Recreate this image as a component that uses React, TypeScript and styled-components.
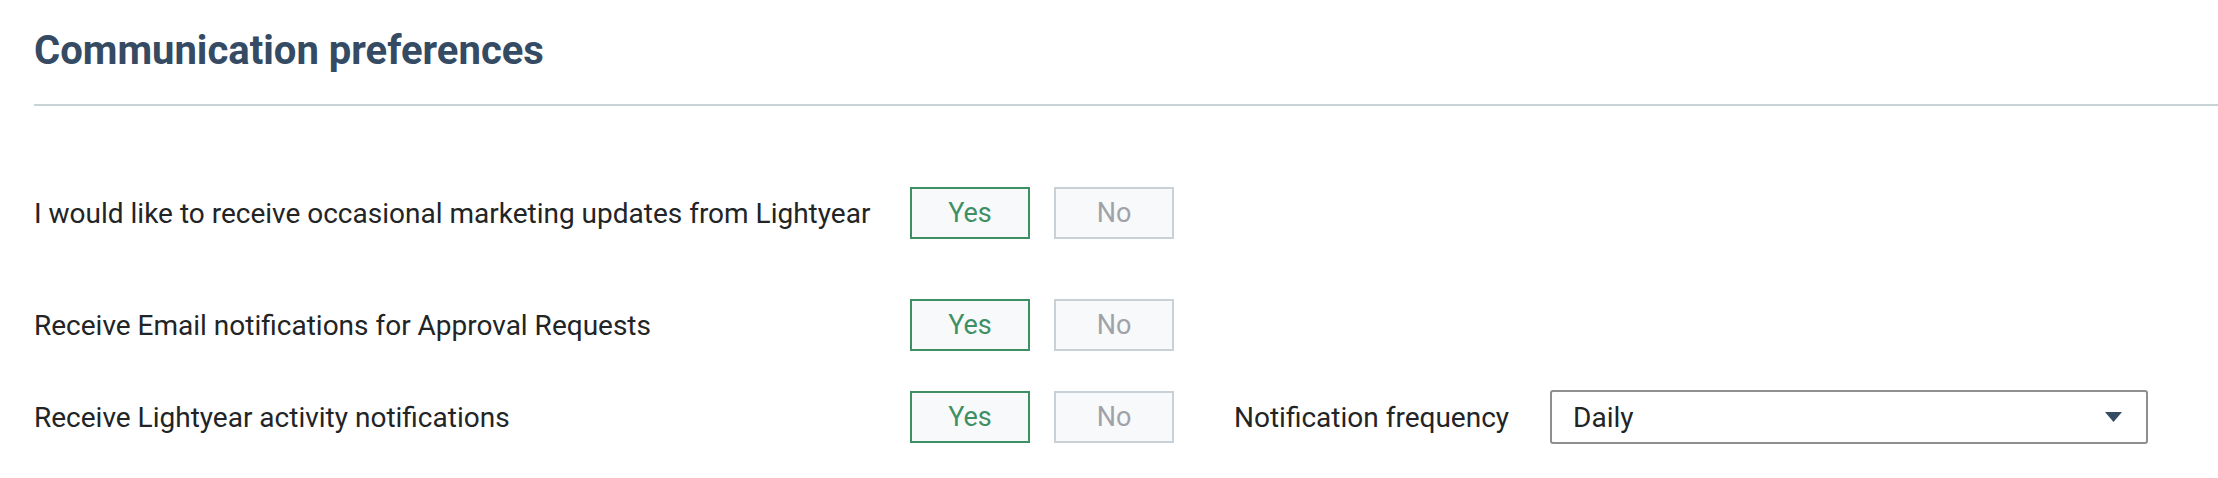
import { useState } from "react";
import styled, { createGlobalStyle } from "styled-components";

const GlobalStyle = createGlobalStyle`
  body {
    margin: 0;
    background: #ffffff;
    font-family: Roboto, "Liberation Sans", sans-serif;
  }
`;

const Page = styled.section`
  padding: 26px 0 0 34px;
`;

const Title = styled.h2`
  margin: 0;
  font-size: 40px;
  font-weight: 700;
  line-height: 50px;
  color: #344b63;
`;

const Divider = styled.hr`
  margin: 28px 0 0;
  border: 0;
  border-top: 2px solid #c8d3d5;
`;

const Form = styled.div`
  display: flex;
  flex-direction: column;
  padding-top: 81px;
`;

const Row = styled.div<{ $gap: number }>`
  display: flex;
  align-items: center;
  margin-bottom: ${(p) => p.$gap}px;
`;

const Label = styled.span<{ $width?: number }>`
  width: ${(p) => (p.$width ? `${p.$width}px` : "auto")};
  flex-shrink: 0;
  font-size: 28px;
  color: #222426;
`;

const Toggle = styled.div`
  display: flex;
  gap: 24px;
  width: 324px;
`;

const ToggleButton = styled.button<{ $active: boolean }>`
  width: 120px;
  height: 52px;
  box-sizing: border-box;
  background: #f7f9fb;
  border: 2px solid ${(p) => (p.$active ? "#3f8f64" : "#c9d0d6")};
  color: ${(p) => (p.$active ? "#3f8f64" : "#9fa3a9")};
  font-family: Roboto, "Liberation Sans", sans-serif;
  font-size: 27px;
  padding: 0;
  cursor: pointer;
`;

const Select = styled.div`
  display: flex;
  align-items: center;
  justify-content: space-between;
  box-sizing: border-box;
  width: 598px;
  height: 54px;
  margin-left: 41px;
  padding: 0 24px 0 21px;
  border: 2px solid #8d8f91;
  border-radius: 3px;
  font-size: 28px;
  color: #222426;
`;

function YesNo() {
  const [value, setValue] = useState(true);
  return (
    <Toggle>
      <ToggleButton $active={value} onClick={() => setValue(true)}>Yes</ToggleButton>
      <ToggleButton $active={!value} onClick={() => setValue(false)}>No</ToggleButton>
    </Toggle>
  );
}

export default function App() {
  return (
    <>
      <GlobalStyle />
      <Page>
        <Title>Communication preferences</Title>
        <Divider />
        <Form>
          <Row $gap={60}>
            <Label $width={876}>I would like to receive occasional marketing updates from Lightyear</Label>
            <YesNo />
          </Row>
          <Row $gap={39}>
            <Label $width={876}>Receive Email notifications for Approval Requests</Label>
            <YesNo />
          </Row>
          <Row $gap={0}>
            <Label $width={876}>Receive Lightyear activity notifications</Label>
            <YesNo />
            <Label>Notification frequency</Label>
            <Select>
              <span>Daily</span>
              <svg width="17" height="10" viewBox="0 0 17 10">
                <path d="M0 0 H17 L8.5 10 Z" fill="#344b63" />
              </svg>
            </Select>
          </Row>
        </Form>
      </Page>
    </>
  );
}
